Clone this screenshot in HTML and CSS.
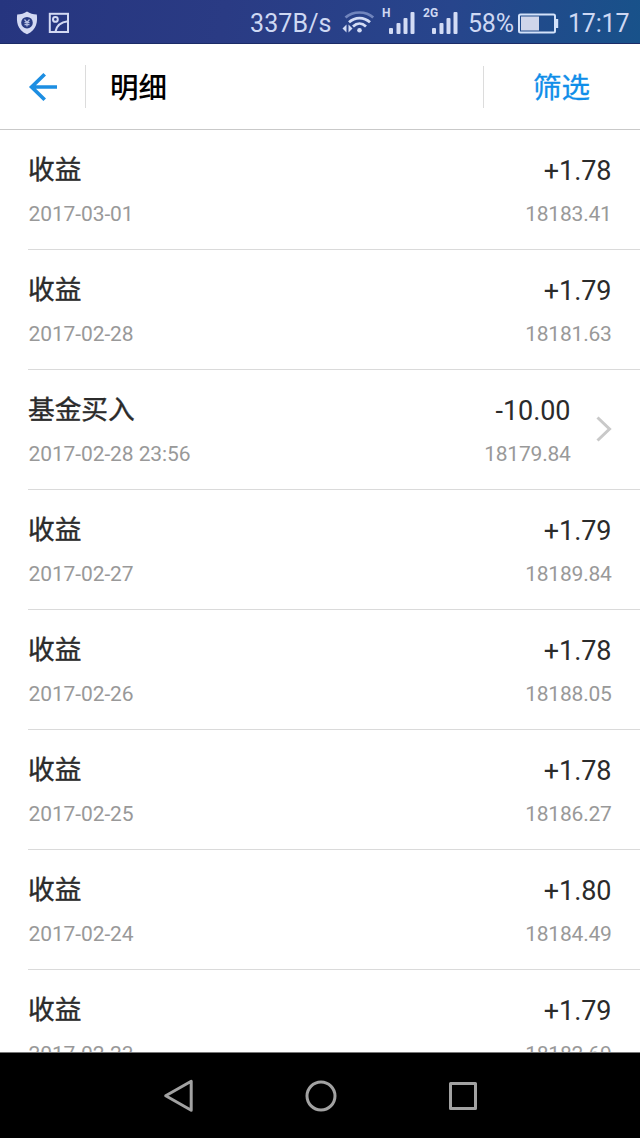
FILE: index.html
```html
<!DOCTYPE html>
<html lang="zh-CN">
<head>
<meta charset="utf-8">
<title>明细</title>
<link rel="stylesheet" href="styles.css">
</head>
<body>
<div class="screen">
  <div class="status">
    <div class="status-left">
      <svg width="22" height="24" viewBox="0 0 22 24"><path d="M11 0.5C8 2.5 5 3.2 1.2 3.5C0.4 10 0.8 19 11 23.2C21.2 19 21.6 10 20.8 3.5C17 3.2 14 2.5 11 .5Z" fill="#d3d9f3"/><circle cx="11" cy="11.7" r="5.8" fill="#293b83"/><path d="M8.5 8.5l2.5 3 2.5-3M8.5 11.7h5M8.5 13.7h5M11 11v4.5" stroke="#b4bee2" stroke-width="1.2" fill="none"/></svg>
      <svg width="22" height="22" viewBox="0 0 22 22" fill="none" stroke="#d3d9f3" stroke-width="2"><rect x="1.8" y="1.8" width="18.2" height="18.2"/><circle cx="7.4" cy="7.4" r="2.4"/><path d="M7.5 19.5C8.5 14 13 10 20 9.2"/></svg>
    </div>
    <div class="status-right">
      <span class="speed">337B/s</span>
      <svg class="wifi" width="33" height="24" viewBox="0 0 33 24" fill="none" stroke="#d3dcf5" stroke-width="2.7"><path d="M3.5 6.6C11 -.2 24-.2 31.2 6.6" stroke="#7185bd"/><path d="M7 11.3C13 5.6 22 5.6 28 11.3"/><path d="M11 15.5C15 11.6 20 11.6 24 15.5"/><circle cx="17.5" cy="19.3" r="2.3" fill="#d3dcf5" stroke="none"/><path d="M4.5 13.5v8L.5 17.5ZM6.5 13.5v8l4-4Z" fill="#d3dcf5" stroke="none"/></svg>
      <div class="signal"><span class="net">H</span><svg width="27" height="23" viewBox="0 0 27 23" fill="#d3dcf5"><rect x="1" y="16" width="4" height="6" rx="1"/><rect x="8.5" y="11" width="4" height="11" rx="1"/><rect x="15.5" y="6" width="4" height="16" rx="1"/><rect x="22.5" y="0" width="4" height="22" rx="1"/></svg></div>
      <div class="signal second"><span class="net">2G</span><svg width="27" height="23" viewBox="0 0 27 23" fill="#d3dcf5"><rect x="1" y="16" width="4" height="6" rx="1"/><rect x="8.5" y="11" width="4" height="11" rx="1"/><rect x="15.5" y="6" width="4" height="16" rx="1"/><rect x="22.5" y="0" width="4" height="22" rx="1"/></svg></div>
      <span class="percent">58%</span>
      <svg class="battery" width="41" height="21" viewBox="0 0 41 21"><rect x="1" y="1.5" width="36" height="18" rx="1.5" fill="none" stroke="#d3e2fa" stroke-width="2"/><rect x="3" y="3.5" width="18" height="14" fill="#d0d5ea"/><rect x="38" y="6" width="2.2" height="9" fill="#d3e2fa"/></svg>
      <span class="clock">17:17</span>
    </div>
  </div>
  <header class="titlebar">
    <div class="back"><svg width="30" height="30" viewBox="0 0 30 30" fill="none" stroke="#1d8ee2" stroke-width="3.7"><path d="M29 15H4M16.7 2.2L3.6 15L16.7 27.8"/></svg></div>
    <h1 class="title">明细</h1>
    <div class="filter">筛选</div>
  </header>
  <main class="list">
    <div class="row"><div class="info"><div class="name">收益</div><div class="sub">2017-03-01</div></div><div class="sum"><div class="amount">+1.78</div><div class="sub">18183.41</div></div></div>
    <div class="row"><div class="info"><div class="name">收益</div><div class="sub">2017-02-28</div></div><div class="sum"><div class="amount">+1.79</div><div class="sub">18181.63</div></div></div>
    <div class="row"><div class="info"><div class="name">基金买入</div><div class="sub">2017-02-28 23:56</div></div><div class="sum"><div class="amount">-10.00</div><div class="sub">18179.84</div></div><svg class="chevron" width="16" height="26" viewBox="0 0 16 26" fill="none" stroke="#c9c9c9" stroke-width="3"><path d="M1.5 1.5L13.5 13L1.5 24.5"/></svg></div>
    <div class="row"><div class="info"><div class="name">收益</div><div class="sub">2017-02-27</div></div><div class="sum"><div class="amount">+1.79</div><div class="sub">18189.84</div></div></div>
    <div class="row"><div class="info"><div class="name">收益</div><div class="sub">2017-02-26</div></div><div class="sum"><div class="amount">+1.78</div><div class="sub">18188.05</div></div></div>
    <div class="row"><div class="info"><div class="name">收益</div><div class="sub">2017-02-25</div></div><div class="sum"><div class="amount">+1.78</div><div class="sub">18186.27</div></div></div>
    <div class="row"><div class="info"><div class="name">收益</div><div class="sub">2017-02-24</div></div><div class="sum"><div class="amount">+1.80</div><div class="sub">18184.49</div></div></div>
    <div class="row"><div class="info"><div class="name">收益</div><div class="sub">2017-02-23</div></div><div class="sum"><div class="amount">+1.79</div><div class="sub">18182.69</div></div></div>
  </main>
  <nav class="navbar">
    <svg width="32" height="36" viewBox="0 0 32 36" fill="none" stroke="#a2a2a2" stroke-width="3" stroke-linejoin="round"><path d="M29.2 3.3V32.3L3.7 17.8Z"/></svg>
    <svg width="32" height="32" viewBox="0 0 32 32" fill="none" stroke="#a2a2a2" stroke-width="3"><circle cx="16" cy="16" r="14"/></svg>
    <svg width="30" height="30" viewBox="0 0 30 30" fill="none" stroke="#a2a2a2" stroke-width="3" stroke-linejoin="round"><rect x="2.5" y="2.5" width="25" height="25"/></svg>
  </nav>
</div>
</body>
</html>
```
FILE: styles.css
```css
* { box-sizing: border-box; }
body { margin: 0; font-family: Roboto, "Noto Sans CJK SC", sans-serif; background: #fff; }
svg { display: block; flex: none; }
.screen { width: 640px; height: 1138px; display: flex; flex-direction: column; overflow: hidden; }
.status { flex: none; height: 44px; padding: 0 11px 0 16px; display: flex; justify-content: space-between; background: linear-gradient(100deg, #26357f 0%, #2a3b84 35%, #27458c 70%, #18528a 100%); border-bottom: 1px solid #1c2c67; color: #ced8f3; }
.status-left { display: flex; align-items: center; gap: 10px; height: 45px; }
.status-right { display: flex; align-items: center; height: 46px; font-size: 25px; line-height: 30px; white-space: nowrap; }
.status-right > span { padding-top: 2px; }
.speed { width: 92px; letter-spacing: .1px; }
.wifi { margin-right: 8px; }
.signal { display: flex; position: relative; width: 33px; padding-left: 5px; margin-right: 8px; }
.signal.second { width: 36px; padding-left: 7px; margin-right: 8px; }
.net { position: absolute; left: -1px; top: -5px; font-size: 12px; line-height: 12px; font-weight: 700; }
.percent { width: 50px; letter-spacing: -.2px; }
.battery { margin-right: 9px; }
.clock { width: 61px; letter-spacing: -.2px; }
.titlebar { flex: none; height: 86px; display: flex; align-items: center; border-bottom: 1px solid #c9c9c9; }
.back { width: 86px; height: 43px; padding-left: 27.5px; display: flex; align-items: center; border-right: 1px solid #dcdcdc; }
.title { flex: 1; margin: 0; padding: 5px 0 0 24px; font-size: 28.5px; line-height: 42px; font-weight: 500; color: #000; }
.filter { width: 157px; height: 42px; padding-right: 1px; line-height: 46px; font-size: 28.5px; text-align: center; color: #108ee9; border-left: 1px solid #dcdcdc; -webkit-text-stroke: .3px; }
.list { flex: 1; min-height: 0; overflow: hidden; }
.row { height: 120px; margin-left: 28px; padding: 21px 28px 0 0; display: flex; border-bottom: 1px solid #dadada; color: #2b2b2b; }
.info { flex: 1; }
.sum { text-align: right; }
.name, .amount { height: 40px; font-size: 27px; line-height: 40px; }
.amount { padding-right: .5px; letter-spacing: -.05px; }
.name { font-size: 26.7px; line-height: 38px; -webkit-text-stroke: .4px; }
.sub { margin-top: 9px; font-size: 21px; line-height: 28px; letter-spacing: -.1px; color: #999; }
.sum .sub { padding-right: .3px; letter-spacing: -.2px; }
.info .sub { padding-left: .5px; }
.chevron { margin: 25px 0 0 25px; }
.navbar { flex: none; height: 86px; padding: 0 162px 0 162px; display: flex; align-items: center; justify-content: space-between; background: #000; border-top: 1px solid #777; }
```
